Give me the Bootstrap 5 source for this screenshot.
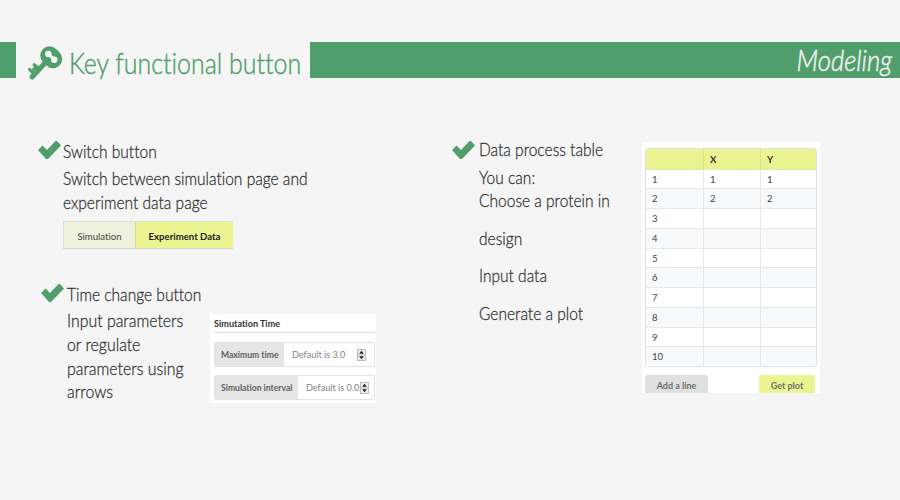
<!DOCTYPE html>
<html lang="en">
<head>
<meta charset="utf-8">
<title>Modeling - Key functional button</title>
<link rel="stylesheet" href="https://cdn.jsdelivr.net/npm/bootstrap@5.3.0/dist/css/bootstrap.min.css">
<style>
body{width:900px;height:500px;background:#f5f5f5;font-family:Lato,sans-serif;font-variant-ligatures:none;color:#333;overflow:hidden}
.topbar{margin-top:42px;height:36px;background:#509e6b}
.topic{width:294px;margin-left:16px;background:#f5f5f5;color:#509e6b;padding-left:11px}
.topic h1{font-size:28.5px;font-weight:300;line-height:36px;margin:3px 0 0 6px;-webkit-text-stroke:.4px}
.key-icon{margin-top:3px}
.section-name{font-size:28.5px;font-style:italic;font-weight:300;color:#f0f0ee;line-height:36px;margin-right:8px;-webkit-text-stroke:.5px}
.sq{display:inline-block;white-space:nowrap;transform:scaleX(var(--k,.899));transform-origin:0 50%}
.topic .sq{--k:.875}
.from-end{--k:.9;transform-origin:100% 50%}
.narrow .sq{--k:.917}
.content{padding-left:38px;padding-top:62px}
.left-col{width:414px;flex:none}
.mid-col{width:190px;flex:none}
.copy{font-size:17.3px;font-weight:300;line-height:23.7px;-webkit-text-stroke:.28px}
.copy>div{height:23.7px;white-space:nowrap}
.tick{width:23px;height:19px;flex:none;fill:#509e6b;margin-top:1px}
.switcher{width:170px;height:28px;margin:6px 0 0 25px;font-size:9.6px;border-top:1px solid #dedfd9;border-bottom:1px solid #d5d8cc}
.switcher>div{line-height:29px;text-align:center}
.sim{width:72px;background:#eef1db;border-left:1px solid #dcdfd2;color:#444}
.exp{width:98px;background:#ebf491;border-left:1px solid #d6de97;color:#222;font-weight:700}
.time-panel{width:166px;height:89px;margin-left:27px;margin-top:8px;padding:0 1px 0 4px;background:#fff;font-size:9.4px}
.time-panel h2{font-size:9.1px;font-weight:700;line-height:18px;height:19px;margin:0 0 9px;border-bottom:1px solid #dedede;padding-top:1px;color:#333}
.field{height:25px;border:1px solid #e2e2e2;border-radius:2px;margin-bottom:8px;line-height:24px}
.field b{background:#e5e5e5;color:#606060;padding-left:6px;flex:none;font-size:8.6px;white-space:nowrap}
.hint{color:#858585;padding-left:8px;white-space:nowrap;flex:none;font-size:9.1px}
.spin{width:9px;height:12px;flex:none;margin:6px 8px 0 auto}
.field .over{margin-left:auto;position:relative}
.tight{margin-right:-5px}
.plot-panel{width:178px;height:251px;margin-top:2px;padding:5.500px 3px 0;background:#fff;overflow:hidden;font-size:9.5px}
.grid{width:172px;border:1px solid #dedfdf;border-radius:3px;overflow:hidden}
.line{display:grid;grid-template-columns:57px 57px 56px;height:19.75px;line-height:19px;border-top:1px solid #e7e8ea;color:#444}
.line:nth-child(odd){background:#f8f9fb}
.line:nth-child(2){border-top-color:#e1e7b0}
.line span{padding-left:6px}
.line span+span{border-left:1px solid #e5e6e7}
.line.top{height:20px;line-height:21px;background:#ebf491;border-top:0;font-weight:700;color:#333}
.line.top span+span{border-left-color:#d8e08d}
.act{height:26px;line-height:22px;margin-top:8px;border-radius:3px;text-align:center;font-weight:700;color:#6d6d6d;font-size:9px}
.add{width:63px;background:#dfe0e1}
.plot{width:56px;background:#ebf491;margin-right:2px}
</style>
</head>
<body>
<header class="topbar d-flex justify-content-between">
  <div class="topic d-flex">
    <svg width="36" height="36" viewBox="0 0 36 36" class="key-icon flex-shrink-0"><g fill="none" stroke="#509e6b" stroke-linecap="round"><path d="M18 18 5 32" stroke-width="5"/><path d="M2.600 24.500 7 29M7.200 19.700l5 4.500" stroke-width="3.200"/><path d="m6.500 24.500 3-3" stroke-width="3"/><path d="m22.500 10.500 3.400 3.400" stroke-width="18.500"/></g><g fill="#f5f5f5"><circle cx="21.300" cy="9" r="3.200"/><circle cx="27.300" cy="14.700" r="3.200"/></g><path d="m21.500 9.200 5.800 5.500" stroke="#f5f5f5" stroke-width="3"/></svg>
    <h1><span class="sq">Key functional button</span></h1>
  </div>
  <div class="section-name"><span class="sq from-end">Modeling</span></div>
</header>

<main class="content d-flex align-items-start">
  <section class="left-col">
    <div class="d-flex">
      <svg class="tick" viewBox="0 0 23 19"><path d="M0 9 4.500 4.500 9 9 17.500 0h1.500L23 4.500 10 18H8Z"/></svg>
      <div class="copy" style="margin-left:2px"><div><span class="sq">Switch button</span></div></div>
    </div>
    <div class="copy" style="margin:3.500px 0 0 25px"><div><span class="sq">Switch between simulation page and</span></div><div><span class="sq">experiment data page</span></div></div>
    <div class="switcher d-flex"><div class="sim">Simulation</div><div class="exp">Experiment Data</div></div>

    <div class="d-flex" style="margin:34px 0 0 3px">
      <svg class="tick" viewBox="0 0 23 19"><path d="M0 9 4.500 4.500 9 9 17.500 0h1.500L23 4.500 10 18H8Z"/></svg>
      <div class="copy" style="margin-left:3px"><div><span class="sq">Time change button</span></div></div>
    </div>
    <div class="d-flex" style="margin-left:29px">
      <div class="copy narrow" style="width:116px;margin-top:3px"><div><span class="sq">Input parameters</span></div><div><span class="sq">or regulate</span></div><div><span class="sq">parameters using</span></div><div><span class="sq">arrows</span></div></div>
      <div class="time-panel">
        <h2>Simutation Time</h2>
        <div class="field d-flex"><b style="width:69px">Maximum time</b><span class="hint">Default is 3.0</span><svg class="spin" viewBox="0 0 9 12"><path fill="#ececec" stroke="#bbb" d="M.5.500h8v11h-8zM.5 6h8"/><path fill="#222" d="m4.500 1.800 2.300 3H2.200ZM4.500 10.200l2.300-3H2.200Z"/></svg></div>
        <div class="field d-flex"><b style="width:83px">Simulation interval</b><span class="hint tight">Default is 0.05</span><svg class="spin over" viewBox="0 0 9 12"><path fill="#ececec" stroke="#bbb" d="M.5.500h8v11h-8zM.5 6h8"/><path fill="#222" d="m4.500 1.800 2.300 3H2.200ZM4.500 10.200l2.300-3H2.200Z"/></svg></div>
      </div>
    </div>
  </section>

  <section class="mid-col d-flex">
    <svg class="tick" viewBox="0 0 23 19"><path d="M0 9 4.500 4.500 9 9 17.500 0h1.500L23 4.500 10 18H8Z"/></svg>
    <div class="copy" style="margin:-2px 0 0 4px">
      <div><span class="sq">Data process table</span></div>
      <div style="margin-top:4px"><span class="sq">You can:</span></div>
      <div><span class="sq">Choose a protein in</span></div>
      <div style="margin-top:13.7px"><span class="sq">design</span></div>
      <div style="margin-top:13.7px"><span class="sq">Input data</span></div>
      <div style="margin-top:13.7px"><span class="sq">Generate a plot</span></div>
    </div>
  </section>

  <section class="plot-panel">
    <div class="grid">
      <div class="line top"><span></span><span>X</span><span>Y</span></div>
      <div class="line"><span>1</span><span>1</span><span>1</span></div>
      <div class="line"><span>2</span><span>2</span><span>2</span></div>
      <div class="line"><span>3</span><span></span><span></span></div>
      <div class="line"><span>4</span><span></span><span></span></div>
      <div class="line"><span>5</span><span></span><span></span></div>
      <div class="line"><span>6</span><span></span><span></span></div>
      <div class="line"><span>7</span><span></span><span></span></div>
      <div class="line"><span>8</span><span></span><span></span></div>
      <div class="line"><span>9</span><span></span><span></span></div>
      <div class="line"><span>10</span><span></span><span></span></div>
    </div>
    <div class="d-flex justify-content-between">
      <div class="act add">Add a line</div>
      <div class="act plot">Get plot</div>
    </div>
  </section>
</main>
<script src="https://cdn.jsdelivr.net/npm/bootstrap@5.3.0/dist/js/bootstrap.bundle.min.js"></script>
</body>
</html>
